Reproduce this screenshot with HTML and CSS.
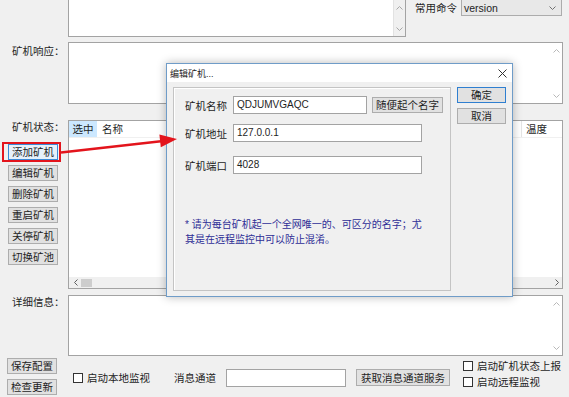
FILE: index.html
```html
<!DOCTYPE html>
<html>
<head>
	<meta charset="utf-8">
	<title>矿机管理</title>
	<link rel="stylesheet" href="styles.css">
</head>
<body>
	<div class="main">
		<div class="top">
			<div class="box cmdlog">
				<div class="vbar grey">
					<svg width="7" height="4"><path d="M0.5 3.5L3.5 0.5L6.5 3.5" fill="none" stroke="#a8a8a8"/></svg>
					<svg width="7" height="4"><path d="M0.5 0.5L3.5 3.5L6.5 0.5" fill="none" stroke="#a8a8a8"/></svg>
				</div>
			</div>
			<div class="common">
				<span class="inl">常用命令</span>
				<div class="combo">
					<span>version</span>
					<svg width="7" height="4"><path d="M0.5 0.5L3.5 3.5L6.5 0.5" fill="none" stroke="#707070"/></svg>
				</div>
			</div>
		</div>

		<div class="row resp">
			<div class="lbl">矿机响应：</div>
			<div class="box wide">
				<div class="vbar">
					<svg width="7" height="4"><path d="M0.5 3.5L3.5 0.5L6.5 3.5" fill="none" stroke="#b8b8b8"/></svg>
					<svg width="7" height="4"><path d="M0.5 0.5L3.5 3.5L6.5 0.5" fill="none" stroke="#b8b8b8"/></svg>
				</div>
			</div>
		</div>

		<div class="row status">
			<div class="side">
				<div class="lbl">矿机状态：</div>
				<div class="btns">
					<button class="btn focus">添加矿机</button>
					<button class="btn">编辑矿机</button>
					<button class="btn">删除矿机</button>
					<button class="btn">重启矿机</button>
					<button class="btn">关停矿机</button>
					<button class="btn">切换矿池</button>
				</div>
			</div>
			<div class="box wide list">
				<div class="head">
					<span class="sel">选中</span>
					<span class="name">名称</span>
					<span class="temp">温度</span>
				</div>
				<div class="listbody"></div>
				<div class="hbar">
					<svg width="4" height="7"><path d="M3.5 0.5L0.5 3.5L3.5 6.5" fill="none" stroke="#606060"/></svg>
					<span class="thumb"></span>
					<svg class="rt" width="4" height="7"><path d="M0.5 0.5L3.5 3.5L0.5 6.5" fill="none" stroke="#606060"/></svg>
				</div>
			</div>
		</div>

		<div class="row details">
			<div class="lbl">详细信息：</div>
			<div class="box wide">
				<div class="vbar">
					<svg width="7" height="4"><path d="M0.5 3.5L3.5 0.5L6.5 3.5" fill="none" stroke="#b8b8b8"/></svg>
					<svg width="7" height="4"><path d="M0.5 0.5L3.5 3.5L6.5 0.5" fill="none" stroke="#b8b8b8"/></svg>
				</div>
			</div>
		</div>

		<div class="bottom">
			<div class="btns small">
				<button class="btn">保存配置</button>
				<button class="btn">检查更新</button>
			</div>
			<label class="chk local"><span class="cb"></span>启动本地监视</label>
			<span class="inl channel">消息通道</span>
			<div class="edit channel-input"></div>
			<button class="btn service">获取消息通道服务</button>
			<div class="checks">
				<label class="chk"><span class="cb"></span>启动矿机状态上报</label>
				<label class="chk"><span class="cb"></span>启动远程监视</label>
			</div>
		</div>
	</div>

	<div class="dialog">
		<div class="titlebar">
			<span>编辑矿机...</span>
			<svg width="9" height="9"><path d="M0.5 0.5L8.5 8.5M8.5 0.5L0.5 8.5" stroke="#333" stroke-width="1"/></svg>
		</div>
		<div class="dlgbody">
			<div class="frame">
				<div class="field">
					<span class="flabel">矿机名称</span>
					<div class="edit short">QDJUMVGAQC</div>
					<button class="btn random">随便起个名字</button>
				</div>
				<div class="field second">
					<span class="flabel">矿机地址</span>
					<div class="edit long">127.0.0.1</div>
				</div>
				<div class="field third">
					<span class="flabel">矿机端口</span>
					<div class="edit long">4028</div>
				</div>
				<p class="note">* 请为每台矿机起一个全网唯一的、可区分的名字；尤<br>其是在远程监控中可以防止混淆。</p>
			</div>
			<div class="dlgbtns">
				<button class="btn ok">确定</button>
				<button class="btn">取消</button>
			</div>
		</div>
	</div>

	<svg class="mark" width="569" height="397">
		<rect x="3" y="143" width="57" height="18" fill="none" stroke="#e3141c" stroke-width="2"/>
		<line x1="61" y1="152.5" x2="161" y2="141.2" stroke="#e3141c" stroke-width="2.5"/>
		<polygon points="177,139 159.4,134.6 160.8,147.2" fill="#e3141c"/>
	</svg>
</body>
</html>
```

FILE: styles.css
```css
*{
	box-sizing: border-box;
}
body{
	margin: 0;
	width: 569px;
	height: 397px;
	overflow: hidden;
	position: relative;
	background: #f0f0f0;
	color: #1e1e1e;
	font: 10.5px "Liberation Sans", "Noto Sans CJK SC", sans-serif;
}
.box{
	background: #fff;
	border: 1px solid #a3a3a3;
	display: flex;
	justify-content: flex-end;
}
.vbar{
	width: 12px;
	display: flex;
	flex-direction: column;
	justify-content: space-between;
	align-items: center;
	padding: 6px 0 5px;
}
.vbar.grey{
	background: #f0f0f0;
	border-left: 1px solid #e2e2e2;
}

/* top line */
.top{
	display: flex;
	height: 42px;
}
.cmdlog{
	margin-left: 68px;
	margin-top: -1px;
	width: 338px;
	height: 38px;
}
.common{
	margin-left: 9px;
	display: flex;
	align-items: flex-start;
	gap: 4px;
}
.inl{
	line-height: 16px;
}
.combo{
	width: 101px;
	height: 17px;
	margin-top: -1px;
	border: 1px solid #acacac;
	background: #e8e8e8;
	display: flex;
	align-items: center;
	justify-content: space-between;
	padding: 0 5px 0 2px;
}

/* rows */
.row{
	display: flex;
}
.lbl{
	width: 68px;
	padding-left: 12px;
	line-height: 14px;
	padding-top: 2px;
}
.wide{
	width: 495px;
}
.resp{
	height: 62px;
}
.status{
	margin-top: 16px;
	height: 169px;
}
.status .lbl{
	padding-top: 0;
}
.details{
	margin-top: 6px;
	height: 61px;
}
.details .lbl{
	padding-top: 0;
}

.btn{
	font: inherit;
	color: inherit;
	background: #e1e1e1;
	border: 1px solid #adadad;
	height: 16px;
	padding: 0;
	line-height: 14px;
	text-align: center;
}
.btns{
	display: flex;
	flex-direction: column;
	gap: 5px;
	margin: 10px 0 0 8px;
	width: 50px;
}
.btn.focus{
	border-color: #3c8ad6;
	background: #e5f1fb;
}

/* list */
.list{
	flex-direction: column;
	justify-content: flex-start;
}
.head{
	display: flex;
	height: 17px;
	line-height: 16px;
	border-bottom: 1px solid #f0f0f0;
}
.sel{
	width: 28px;
	background: #cce8ff;
	text-align: center;
}
.name{
	margin-left: 5px;
}
.temp{
	margin-left: auto;
	width: 41px;
	border-left: 1px solid #e5e5e5;
	padding-left: 4px;
}
.listbody{
	flex: 1;
}
.hbar{
	height: 11px;
	background: #f0f0f0;
	display: flex;
	align-items: center;
	padding: 0 3px 0 5px;
}
.thumb{
	width: 11px;
	height: 8px;
	margin-left: 3px;
	background: #cdcdcd;
}
.hbar .rt{
	margin-left: auto;
}

/* bottom line */
.bottom{
	display: flex;
	align-items: center;
	height: 39px;
	margin-top: 2px;
}
.btns.small{
	margin: 0 0 0 7px;
	align-self: flex-start;
	width: 50px;
}
.btns.small .btn{
	height: 16px;
}
.chk{
	display: flex;
	align-items: center;
	gap: 4px;
	line-height: 14px;
}
.cb{
	width: 10px;
	height: 10px;
	background: #fff;
	border: 1px solid #333;
}
.local{
	margin-left: 16px;
}
.channel{
	margin-left: 24px;
}
.edit{
	background: #fff;
	border: 1px solid #a3a3a3;
	height: 18px;
	line-height: 16px;
	padding-left: 3px;
	font-size: 10px;
}
.channel-input{
	margin-left: 10px;
	width: 120px;
}
.service{
	margin-left: 10px;
	width: 94px;
	height: 17px;
}
.checks{
	align-self: flex-start;
	margin: 1px 0 0 13px;
	display: flex;
	flex-direction: column;
	gap: 2px;
}

/* dialog */
.dialog{
	position: absolute;
	left: 166px;
	top: 63px;
	width: 347px;
	height: 234px;
	background: #f0f0f0;
	border: 1px solid #6f9cc8;
	box-shadow: 0 0 9px rgba(0, 0, 0, 0.28);
}
.titlebar{
	height: 18px;
	background: #fff;
	display: flex;
	align-items: center;
	justify-content: space-between;
	padding: 0 5px 0 3px;
	font-size: 9px;
}
.dlgbody{
	display: flex;
	padding: 5px 0 0 6px;
}
.frame{
	width: 278px;
	height: 204px;
	border: 1px solid #c4c4c4;
	box-shadow: inset 1px 1px 0 #fff;
	padding: 8px 0 0 11px;
}
.field{
	display: flex;
	align-items: center;
	height: 18px;
}
.field.second{
	margin-top: 10px;
}
.field.third{
	margin-top: 14px;
}
.flabel{
	width: 48px;
}
.short{
	width: 134px;
}
.long{
	width: 189px;
}
.random{
	margin-left: 5px;
	width: 71px;
}
.note{
	margin: 43px 0 0;
	color: #2e2e96;
	font-size: 10px;
	line-height: 15px;
}
.dlgbtns{
	display: flex;
	flex-direction: column;
	gap: 5px;
	margin-left: 6px;
	width: 49px;
}
.btn.ok{
	border-color: #2f7fd0;
}

/* annotation overlay */
.mark{
	position: absolute;
	left: 0;
	top: 0;
	pointer-events: none;
}
```
